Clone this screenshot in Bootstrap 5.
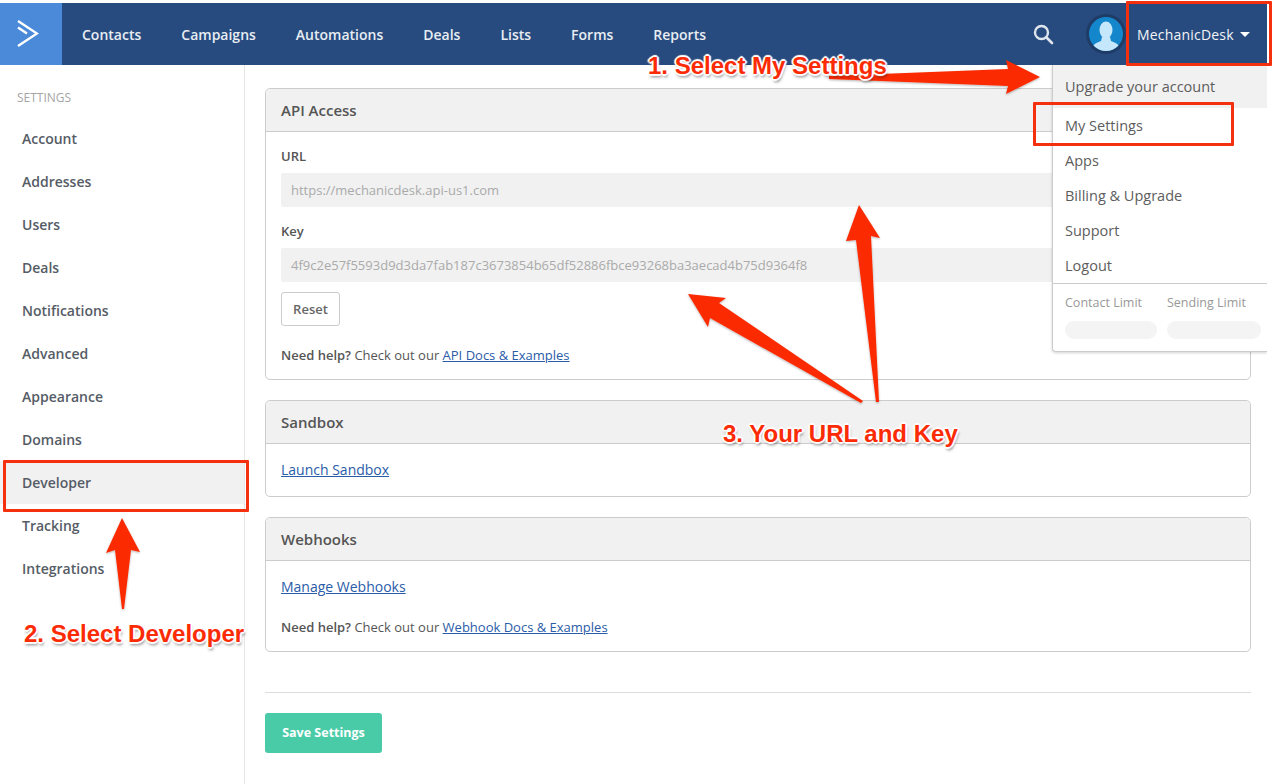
<!DOCTYPE html>
<html lang="en">
<head>
    <meta charset="UTF-8">
    <meta name="viewport" content="width=device-width, initial-scale=1.0">
    <title>Settings</title>
    <link href="https://cdn.jsdelivr.net/npm/bootstrap@5.3.0/dist/css/bootstrap.min.css" rel="stylesheet">
    <style>
        html, body { height: 784px; overflow: hidden; }
        body { font-family: "Open Sans", sans-serif; font-size: 13px; color: #555; background: #fff; position: relative; }
        a { color: #2a5ca8; }
        .app-shell { width: 1267px; padding-top: 3px; height: 784px; }
        .top-bar { height: 62px; background: #274b7e; }
        .logo-box { width: 62px; background: #4a8ad8; padding-left: 17px; }
        .top-link { color: #e8edf3; font-weight: 600; font-size: 14px; text-decoration: none; }
        .top-links { padding-left: 20px; gap: 40px; }
        .search-ico { margin-right: 32px; }
        .avatar-ring { width: 40px; height: 40px; border-radius: 50%; background: #1f3c66; padding: 3px; margin-right: 11px; }
        .user-name { color: #f2f4f7; font-size: 14px; font-weight: 400; width: 130px; letter-spacing: .2px; }
        .user-caret { border-left: 5px solid transparent; border-right: 5px solid transparent; border-top: 5px solid #fff; margin-left: 6px; }
        .side-col { width: 245px; height: 719px; border-right: 1px solid #e6e6e6; }
        .side-title { font-size: 12px; color: #a5a5a5; padding: 24px 0 0 17px; height: 52px; line-height: 18px; }
        .side-item { height: 43px; line-height: 43px; padding-left: 22px; font-size: 14px; font-weight: 600; color: #555c66; }
        .side-item.is-active { background: #f1f1f1; }
        .main-col { width: 1022px; padding: 23px 16px 0 20px; }
        .set-card { border: 1px solid #ccc; border-radius: 5px; margin-bottom: 20px; }
        .set-head { height: 43px; line-height: 42px; padding-left: 15px; background: #f1f1f1; border-bottom: 1px solid #ccc; border-radius: 5px 5px 0 0; font-size: 15px; font-weight: 600; color: #555; }
        .set-body { padding: 0 15px; }
        .fld-label { font-size: 13px; font-weight: 600; line-height: 17px; color: #555; }
        .fld-box { height: 34px; line-height: 35px; background: #f1f1f1; padding-left: 10px; font-size: 13px; color: #aaa; border-radius: 2px; }
        .reset-btn { width: 59px; height: 34px; margin-top: 10px; padding: 1px 0 0; border: 1px solid #ccc; border-radius: 3px; background: #fff; font-size: 13px; font-weight: 600; color: #666; }
        .help-line { font-size: 13px; line-height: 18px; color: #555; }
        .help-line b { font-weight: 600; }
        .help-api { padding: 20px 0 15px; }
        .help-hooks { margin-top: 21px; }
        .body-link { font-size: 14px; line-height: 20px; }
        .sandbox-body { padding-top: 16px; padding-bottom: 15px; }
        .hooks-body { padding-top: 16px; padding-bottom: 15px; }
        .page-rule { margin: 40px 0 20px; border: 0; border-top: 1px solid #ddd; opacity: 1; }
        .save-btn { width: 117px; height: 40px; padding: 1px 0 0; border: 0; border-radius: 3px; background: #4acba8; color: #fff; font-size: 12.5px; font-weight: 700; }
        .user-menu { position: absolute; left: 1052px; top: 65px; width: 215px; height: 287px; background: #fff; border-left: 1px solid #ccc; border-bottom: 1px solid #ccc; border-radius: 0 0 0 4px; box-shadow: 0 1px 3px rgba(0,0,0,.18); clip-path: inset(0 0 -6px -6px); }
        .menu-row { height: 35px; line-height: 35px; padding-left: 12px; font-size: 14.5px; color: #5d5d5d; }
        .menu-row.is-first { height: 43px; line-height: 44px; background: #f1f1f1; }
        .menu-limits { border-top: 1px solid #ccc; padding: 10px 6px 0 12px; font-size: 12.5px; color: #999; gap: 10px; }
        .limit-one { width: 92px; white-space: nowrap; }
        .limit-two { width: 94px; white-space: nowrap; }
        .limit-pill { height: 18px; background: #f4f4f4; border-radius: 9px; margin-top: 8px; }
        .mark-box { position: absolute; border: 3px solid #f4300f; border-radius: 1px; }
        .note-text { position: absolute; font-family: "Liberation Sans", Arial, sans-serif; font-weight: 700; font-size: 24px; line-height: 28px; color: #fb2b05; white-space: nowrap; text-shadow: 0 0 2px #fff, 1px 1px 1px #fff, -1px -1px 1px #fff, 1px -1px 1px #fff, -1px 1px 1px #fff, 2px 0 1px #fff, -2px 0 1px #fff, 0 2px 1px #fff, 0 -2px 1px #fff, 1px 3px 3px rgba(0,0,0,.5); }
        .arrow-layer { position: absolute; left: 0; top: 0; pointer-events: none; }
    </style>
</head>
<body>
    <div class="app-shell">
        <nav class="top-bar d-flex align-items-stretch">
            <div class="logo-box d-flex align-items-center">
                <svg width="22" height="28" viewBox="0 0 22 28"><path d="M1 1 L20 13.5 L1 26" fill="none" stroke="#fff" stroke-width="2.4"/><path d="M1 7.5 L10 13.5" fill="none" stroke="#fff" stroke-width="2.4"/></svg>
            </div>
            <div class="top-links d-flex align-items-center">
                <a class="top-link" href="#">Contacts</a>
                <a class="top-link" href="#">Campaigns</a>
                <a class="top-link" href="#">Automations</a>
                <a class="top-link" href="#">Deals</a>
                <a class="top-link" href="#">Lists</a>
                <a class="top-link" href="#">Forms</a>
                <a class="top-link" href="#">Reports</a>
            </div>
            <div class="ms-auto d-flex align-items-center">
                <svg class="search-ico" width="22" height="22" viewBox="0 0 22 22"><circle cx="9.5" cy="9.5" r="6.5" fill="none" stroke="#dfe5ec" stroke-width="2.4"/><path d="M14.5 14.5 L20 20" stroke="#dfe5ec" stroke-width="2.6" stroke-linecap="round"/></svg>
                <div class="avatar-ring">
                    <svg width="34" height="34" viewBox="0 0 34 34"><circle cx="17" cy="17" r="17" fill="#1487cc"/><clipPath id="av"><circle cx="17" cy="17" r="17"/></clipPath><g clip-path="url(#av)" fill="#c5e7fb"><ellipse cx="17" cy="13" rx="6.5" ry="8.5"/><path d="M13 20 L21 20 L22 24 C27 26 31 27 31 34 L3 34 C3 27 7 26 12 24 Z"/></g></svg>
                </div>
                <div class="user-name d-flex align-items-center">MechanicDesk<span class="user-caret"></span></div>
            </div>
        </nav>
        <div class="d-flex">
            <aside class="side-col">
                <div class="side-title">SETTINGS</div>
                <div class="side-item">Account</div>
                <div class="side-item">Addresses</div>
                <div class="side-item">Users</div>
                <div class="side-item">Deals</div>
                <div class="side-item">Notifications</div>
                <div class="side-item">Advanced</div>
                <div class="side-item">Appearance</div>
                <div class="side-item">Domains</div>
                <div class="side-item is-active">Developer</div>
                <div class="side-item">Tracking</div>
                <div class="side-item">Integrations</div>
            </aside>
            <main class="main-col">
                <section class="set-card">
                    <div class="set-head">API Access</div>
                    <div class="set-body">
                        <div class="fld-label pt-3">URL</div>
                        <div class="fld-box mt-2">https://mechanicdesk.api-us1.com</div>
                        <div class="fld-label mt-3">Key</div>
                        <div class="fld-box mt-2">4f9c2e57f5593d9d3da7fab187c3673854b65df52886fbce93268ba3aecad4b75d9364f8</div>
                        <button class="reset-btn d-block" type="button">Reset</button>
                        <div class="help-line help-api"><b>Need help?</b> Check out our <a href="#">API Docs &amp; Examples</a></div>
                    </div>
                </section>
                <section class="set-card">
                    <div class="set-head">Sandbox</div>
                    <div class="set-body sandbox-body"><a class="body-link" href="#">Launch Sandbox</a></div>
                </section>
                <section class="set-card">
                    <div class="set-head">Webhooks</div>
                    <div class="set-body hooks-body">
                        <a class="body-link" href="#">Manage Webhooks</a>
                        <div class="help-line help-hooks"><b>Need help?</b> Check out our <a href="#">Webhook Docs &amp; Examples</a></div>
                    </div>
                </section>
                <hr class="page-rule">
                <button class="save-btn" type="button">Save Settings</button>
            </main>
        </div>
    </div>

    <div class="user-menu">
        <div class="menu-row is-first">Upgrade your account</div>
        <div class="menu-row">My Settings</div>
        <div class="menu-row">Apps</div>
        <div class="menu-row">Billing &amp; Upgrade</div>
        <div class="menu-row">Support</div>
        <div class="menu-row">Logout</div>
        <div class="menu-limits d-flex">
            <div class="limit-one">Contact Limit<div class="limit-pill"></div></div>
            <div class="limit-two">Sending Limit<div class="limit-pill"></div></div>
        </div>
    </div>

    <div class="mark-box" style="left:1126px;top:1px;width:146px;height:65px"></div>
    <div class="mark-box" style="left:1033px;top:102px;width:201px;height:44px"></div>
    <div class="mark-box" style="left:3px;top:460px;width:246px;height:52px"></div>

    <svg class="arrow-layer" width="1273" height="784" viewBox="0 0 1273 784">
        <defs><filter id="ds" x="-20%" y="-20%" width="140%" height="140%"><feDropShadow dx="0" dy="1" stdDeviation="1" flood-color="#000" flood-opacity=".3"/></filter></defs>
        <g fill="#fb2b05" filter="url(#ds)">
            <path d="M829 76 L1008 69 L1006 60 L1040 77 L1006 94 L1008 86 L829 79 Z"/>
            <path d="M122 609 L115 550 L106 553 L122 518 L140 552 L131 550 L124 609 Z"/>
            <path d="M876 402 L856 240 L846 241 L859 205 L880 238 L871 236 L879 402 Z"/>
            <path d="M861 403 L710 318 L708 327 L688 294 L726 298 L719 303 L863 401 Z"/>
        </g>
    </svg>

    <div class="note-text" style="left:648px;top:52px">1. Select My Settings</div>
    <div class="note-text" style="left:24px;top:620px">2. Select Developer</div>
    <div class="note-text" style="left:723px;top:420px">3. Your URL and Key</div>
    <script src="https://cdn.jsdelivr.net/npm/bootstrap@5.3.0/dist/js/bootstrap.bundle.min.js"></script>
</body>
</html>
